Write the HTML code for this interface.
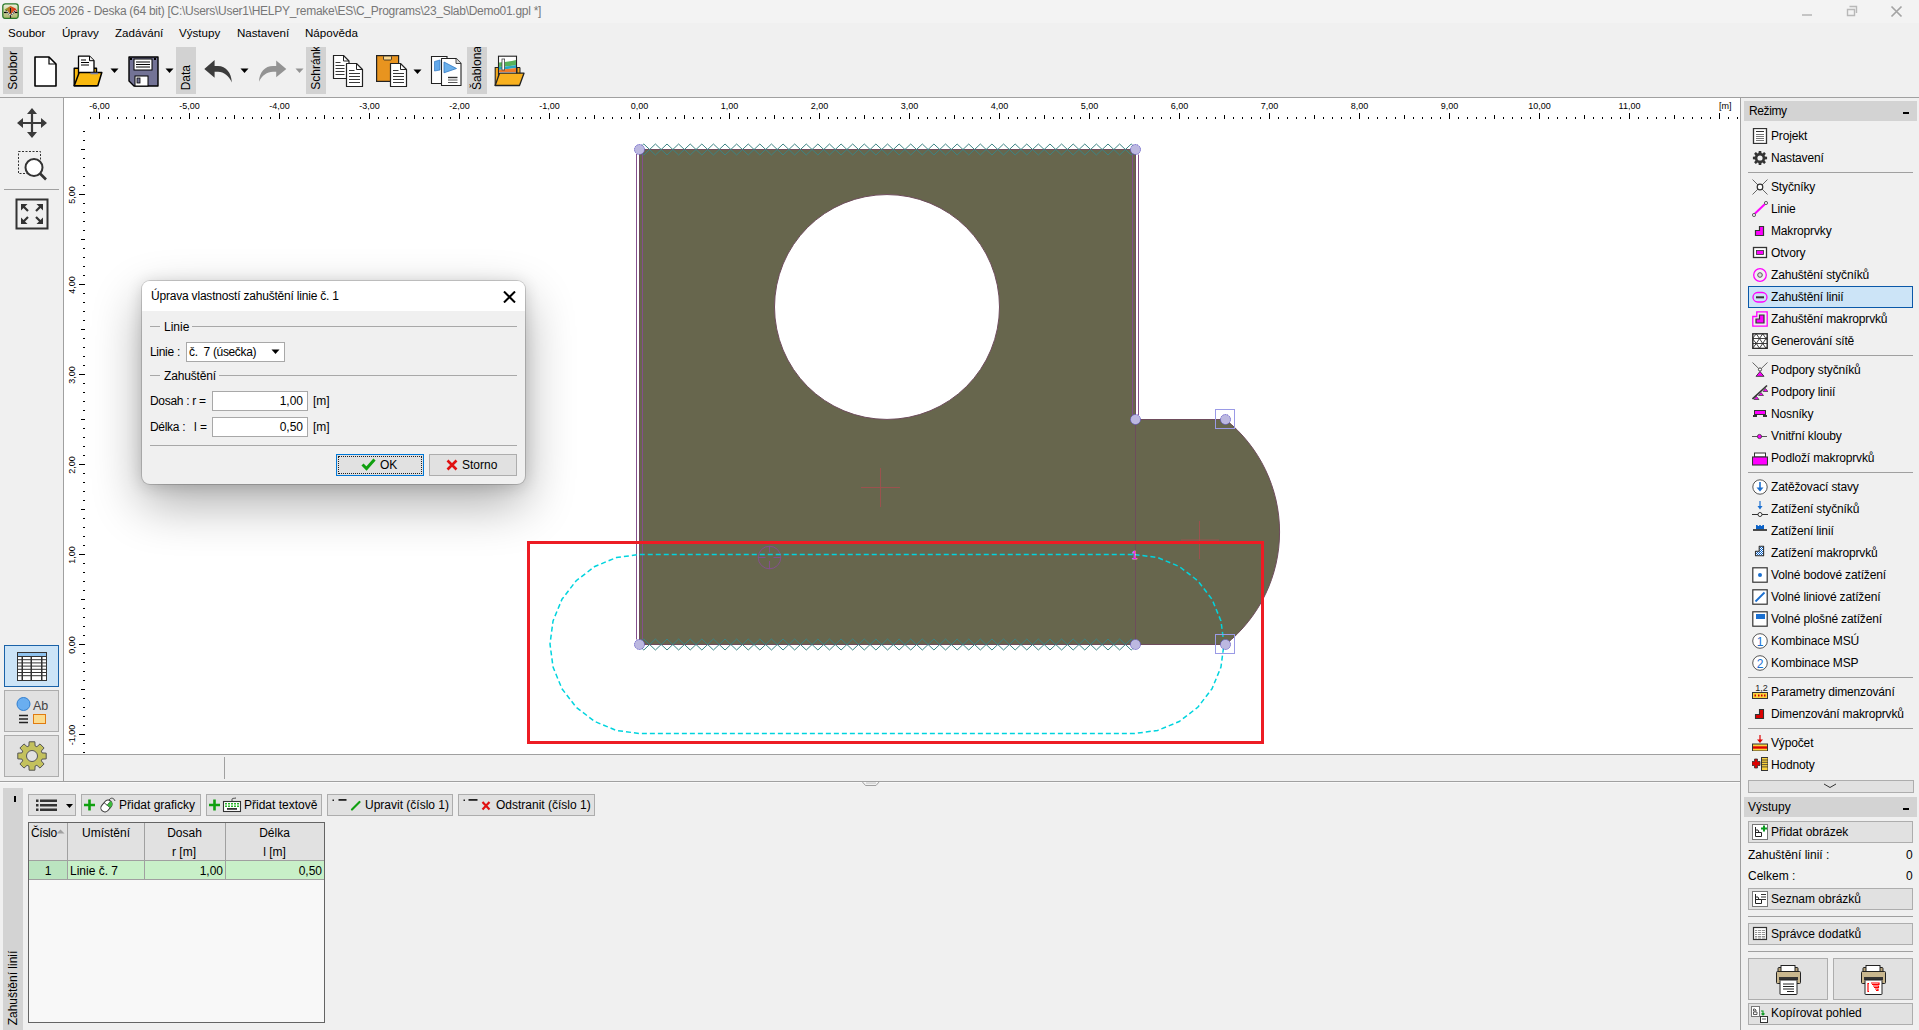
<!DOCTYPE html>
<html><head><meta charset="utf-8">
<style>
*{margin:0;padding:0;box-sizing:border-box}
html,body{width:1919px;height:1030px;overflow:hidden;background:#f0f0f0;font-family:"Liberation Sans",sans-serif;font-size:12px;color:#000}
.a{position:absolute}
.t{position:absolute;white-space:nowrap;line-height:14px}
#title{left:0;top:0;width:1919px;height:23px;background:#f3f3f3}
#menu{left:0;top:23px;width:1919px;height:21px;background:#f0f0f0}
.vl{position:absolute;background:#d2d2d2;width:20px;height:47px;top:47px}
.vl{overflow:hidden}.vl span{position:absolute;left:3px;bottom:4px;writing-mode:vertical-rl;transform:rotate(180deg);white-space:nowrap;font-size:12px;line-height:14px}
#canvas{left:64px;top:98px;width:1676px;height:656px;background:#fff}
#rp{left:1741px;top:98px;width:178px;height:932px;background:#f0f0f0}
.hline{position:absolute;height:1px;background:#a0a0a0}
.vline{position:absolute;width:1px;background:#a0a0a0}
</style></head><body>
<div id="title" class="a"></div>
<div id="menu" class="a"></div>

<!-- TITLE BAR -->
<svg class="a" style="left:2px;top:3px" width="17" height="16" viewBox="0 0 17 16">
<defs><linearGradient id="ig" x1="0" y1="0" x2="0" y2="1"><stop offset="0" stop-color="#eef0dc"/><stop offset="1" stop-color="#aab46a"/></linearGradient>
<linearGradient id="fg" x1="0" y1="0" x2="1" y2="0"><stop offset="0" stop-color="#7ab030"/><stop offset="0.5" stop-color="#d0601c"/><stop offset="1" stop-color="#e01818"/></linearGradient></defs>
<rect x="0.8" y="0.8" width="15.4" height="14.6" rx="2.5" fill="url(#ig)" stroke="#2a7a2a" stroke-width="1.3"/>
<path d="M2 9.5H15.5" stroke="#000" stroke-width="1.2"/>
<path d="M2.5 6.5L8.5 3L13.5 5.5L15 8L10 11L8 12Z" fill="url(#fg)"/>
<path d="M8.5 5V10" stroke="#222" stroke-width="1"/>
<path d="M4 7.5L8.5 12.5L13.5 7.5" stroke="#fff" stroke-width="1.5" fill="none"/>
<path d="M4 7.5L8.5 12.5L13.5 7.5" stroke="#222" stroke-width="1.5" fill="none" stroke-dasharray="1 1"/>
<path d="M8.5 13V15" stroke="#222" stroke-width="1.2"/>
</svg>
<div class="t" style="left:23px;top:4px;font-size:12px;letter-spacing:-0.28px;color:#777">GEO5 2026 - Deska (64 bit) [C:\Users\User1\HELPY_remake\ES\C_Programs\23_Slab\Demo01.gpl *]</div>
<!-- window controls -->
<div class="a" style="left:1802px;top:14px;width:10px;height:2px;background:#c4c4c4"></div>
<svg class="a" style="left:1846px;top:5px" width="12" height="12" viewBox="0 0 12 12"><path d="M3.5 1.5h7v6.5M1.5 4.5h7v6h-7z" fill="none" stroke="#b8b8b8" stroke-width="1.4"/></svg>
<svg class="a" style="left:1890px;top:5px" width="13" height="13" viewBox="0 0 13 13"><path d="M1.5 1.5L11.5 11.5M11.5 1.5L1.5 11.5" stroke="#a4a4a4" stroke-width="1.7"/></svg>
<!-- MENU -->
<div class="t" style="left:8px;top:26px;font-size:11.6px">Soubor</div>
<div class="t" style="left:62px;top:26px;font-size:11.6px">Úpravy</div>
<div class="t" style="left:115px;top:26px;font-size:11.6px">Zadávání</div>
<div class="t" style="left:179px;top:26px;font-size:11.6px">Výstupy</div>
<div class="t" style="left:237px;top:26px;font-size:11.6px">Nastavení</div>
<div class="t" style="left:305px;top:26px;font-size:11.6px">Nápověda</div>
<!-- TOOLBAR -->
<div class="vl" style="left:3px"><span>Soubor</span></div>
<div class="vl" style="left:176px"><span>Data</span></div>
<div class="vl" style="left:306px"><span>Schránka</span></div>
<div class="vl" style="left:467px"><span>Šablona</span></div>
<!-- new -->
<svg class="a" style="left:34px;top:56px" width="23" height="31" viewBox="0 0 23 31"><path d="M1 1H15L22 8V30H1Z" fill="#fff" stroke="#000" stroke-width="1.6" stroke-linejoin="round"/><path d="M15 1V8H22" fill="none" stroke="#000" stroke-width="1.2"/></svg>
<!-- open -->
<svg class="a" style="left:73px;top:55px" width="30" height="32" viewBox="0 0 30 32">
<path d="M1.2 13.2H23.5V30.8H1.2Z" fill="#f9b90f" stroke="#000" stroke-width="1.4" stroke-linejoin="round"/>
<path d="M5.5 1.2H16.5L21 5.7V19H5.5Z" fill="#fff" stroke="#000" stroke-width="1.3" stroke-linejoin="round"/>
<path d="M16.5 1.2V5.7H21" fill="#eee" stroke="#000" stroke-width="1"/>
<path d="M8 5H13M8 7.5H16M8 10H16" stroke="#000" stroke-width="1"/>
<path d="M1.2 30.8L6.2 17.5H28.8L24.8 30.8Z" fill="#f9b90f" stroke="#000" stroke-width="1.5" stroke-linejoin="round"/>
<path d="M17.5 18.5H25" stroke="#7a80a8" stroke-width="1.6"/>
</svg>
<svg class="a" style="left:110px;top:68px" width="9" height="6"><path d="M0.5 0.5H8.5L4.5 5Z" fill="#000"/></svg>
<!-- save -->
<svg class="a" style="left:128px;top:56px" width="31" height="31" viewBox="0 0 31 31">
<path d="M1 1H30V30H6L1 25Z" fill="#737396" stroke="#000" stroke-width="1.4" stroke-linejoin="round"/>
<rect x="6" y="3" width="18" height="11" fill="#fff" stroke="#000" stroke-width="1"/>
<path d="M8 6H22M8 8.5H22M8 11H22" stroke="#000" stroke-width="1"/>
<rect x="7" y="20" width="13" height="10" fill="#fff" stroke="#000" stroke-width="1"/>
<rect x="9" y="22" width="3" height="5" fill="#737396" stroke="#000" stroke-width="0.8"/>
<rect x="2" y="2" width="2" height="2" fill="#000"/><rect x="26" y="2" width="2" height="2" fill="#000"/>
</svg>
<svg class="a" style="left:165px;top:68px" width="9" height="6"><path d="M0.5 0.5H8.5L4.5 5Z" fill="#000"/></svg>
<!-- undo -->
<svg class="a" style="left:203px;top:59px" width="30" height="25" viewBox="0 0 30 25"><path d="M1.3 9.9L11.6 1V7H15C23 7 28.5 14 28.8 23.4C26 17 21 12.8 15 12.8H11.6V18.8Z" fill="#3c3c3c"/></svg>
<svg class="a" style="left:240px;top:68px" width="9" height="6"><path d="M0.5 0.5H8.5L4.5 5Z" fill="#000"/></svg>
<!-- redo -->
<svg class="a" style="left:258px;top:60px" width="30" height="23" viewBox="0 0 30 23"><path d="M28.3 8.9L18.2 0.6V6H15C7 6 1.3 12 1 21.8C4 15.5 9 11.8 15 11.8H18.2V17.2Z" fill="#939393"/></svg>
<svg class="a" style="left:295px;top:68px" width="9" height="6"><path d="M0.5 0.5H8.5L4.5 5Z" fill="#939393"/></svg>
<!-- copy -->
<svg class="a" style="left:332px;top:55px" width="32" height="33" viewBox="0 0 32 33">
<path d="M1.5 0.5H11.5L17 6V23.5H1.5Z" fill="#fff" stroke="#222" stroke-width="1.2" stroke-linejoin="round"/>
<path d="M11.5 0.5V6H17" fill="none" stroke="#222" stroke-width="1"/>
<path d="M3.5 7.5H8.5M3.5 10.5H12.5M3.5 13.5H12.5M3.5 16.5H12.5M3.5 19.5H12.5" stroke="#222" stroke-width="0.9"/>
<path d="M14.5 8.5H24.5L30.5 14.5V31.5H14.5Z" fill="#fff" stroke="#222" stroke-width="1.2" stroke-linejoin="round"/>
<path d="M24.5 8.5V14.5H30.5" fill="none" stroke="#222" stroke-width="1"/>
<path d="M17 15.5H22.5M17 18.5H28M17 21.5H28M17 24.5H28M17 27.5H28" stroke="#222" stroke-width="0.9"/>
</svg>
<!-- paste -->
<svg class="a" style="left:376px;top:55px" width="33" height="33" viewBox="0 0 33 33">
<rect x="0.6" y="0.6" width="22" height="25.8" fill="#e8941f" stroke="#222" stroke-width="1.2"/>
<rect x="7.5" y="1" width="8" height="4" rx="1" fill="#fbd88e" stroke="#222" stroke-width="0.8"/>
<path d="M14.5 8.5H24.5L30.5 14.5V31.5H14.5Z" fill="#fff" stroke="#222" stroke-width="1.2" stroke-linejoin="round"/>
<path d="M24.5 8.5V14.5H30.5" fill="none" stroke="#222" stroke-width="1"/>
<path d="M17 15.5H22.5M17 18.5H28M17 21.5H28M17 24.5H28M17 27.5H28" stroke="#222" stroke-width="0.9"/>
</svg>
<svg class="a" style="left:413px;top:69px" width="9" height="6"><path d="M0.5 0.5H8.5L4.5 5Z" fill="#000"/></svg>
<!-- template -->
<svg class="a" style="left:430px;top:55px" width="32" height="32" viewBox="0 0 32 32">
<path d="M1.5 1.5H17V28.5H1.5Z" fill="#fff" stroke="#222" stroke-width="1.1"/>
<path d="M4.5 6.5L10 5V15L4.5 16Z" fill="#62a8ea" stroke="#2f77c2" stroke-width="0.7"/>
<path d="M11.5 3.5H26L31 8.5V30.5H11.5Z" fill="#fff" stroke="#222" stroke-width="1.1" stroke-linejoin="round"/>
<path d="M26 3.5V8.5H31" fill="#ddd" stroke="#222" stroke-width="0.8"/>
<path d="M14 7L26.5 13.5L14 17.8Z" fill="#6ab0ec" stroke="#2f77c2" stroke-width="0.8" stroke-linejoin="round"/>
<path d="M18 22.5H27.5" stroke="#333" stroke-width="1.4"/><path d="M18 25H27.5M18 27.5H27.5" stroke="#444" stroke-width="0.9"/>
</svg>
<!-- open template -->
<svg class="a" style="left:494px;top:55px" width="31" height="32" viewBox="0 0 31 32">
<path d="M1.2 12.5H5.5V30.5H1.2Z" fill="#f3a81c" stroke="#222" stroke-width="1.1"/>
<path d="M23 12.5H26V20H23Z" fill="#f3a81c" stroke="#222" stroke-width="1"/>
<rect x="4.5" y="1.2" width="18" height="22" fill="#fff" stroke="#222" stroke-width="1.1"/>
<path d="M5 7.5C11 7 16 6.5 22 5V10C16 11 11 11.5 5 12Z" fill="#56b35a"/>
<path d="M5 12C11 11.5 16 11 22 10V13C16 14 11 14 5 15Z" fill="#28a7c4"/>
<path d="M5 15C11 14 16 14 22 13V17H5Z" fill="#f07b28"/>
<rect x="8" y="4" width="2.6" height="11" fill="#fff" stroke="#444" stroke-width="0.8"/>
<path d="M1.2 30.5L5.5 18.2H30L25.5 30.5Z" fill="#f9b11f" stroke="#222" stroke-width="1.3" stroke-linejoin="round"/>
</svg>
<div class="hline" style="left:0;top:97px;width:1919px"></div>
<div id="canvas" class="a"></div>
<!--CANVAS-->
<svg class="a" style="left:64px;top:98px" width="1676" height="656" viewBox="64 98 1676 656" shape-rendering="auto">
<g fill="#000"><rect x="90" y="117" width="1" height="2"/><rect x="99" y="113" width="1" height="6"/><rect x="108" y="117" width="1" height="2"/><rect x="117" y="117" width="1" height="2"/><rect x="126" y="117" width="1" height="2"/><rect x="135" y="117" width="1" height="2"/><rect x="144" y="115" width="1" height="4"/><rect x="153" y="117" width="1" height="2"/><rect x="162" y="117" width="1" height="2"/><rect x="171" y="117" width="1" height="2"/><rect x="180" y="117" width="1" height="2"/><rect x="189" y="113" width="1" height="6"/><rect x="198" y="117" width="1" height="2"/><rect x="207" y="117" width="1" height="2"/><rect x="216" y="117" width="1" height="2"/><rect x="225" y="117" width="1" height="2"/><rect x="234" y="115" width="1" height="4"/><rect x="243" y="117" width="1" height="2"/><rect x="252" y="117" width="1" height="2"/><rect x="261" y="117" width="1" height="2"/><rect x="270" y="117" width="1" height="2"/><rect x="279" y="113" width="1" height="6"/><rect x="288" y="117" width="1" height="2"/><rect x="297" y="117" width="1" height="2"/><rect x="306" y="117" width="1" height="2"/><rect x="315" y="117" width="1" height="2"/><rect x="324" y="115" width="1" height="4"/><rect x="333" y="117" width="1" height="2"/><rect x="342" y="117" width="1" height="2"/><rect x="351" y="117" width="1" height="2"/><rect x="360" y="117" width="1" height="2"/><rect x="369" y="113" width="1" height="6"/><rect x="378" y="117" width="1" height="2"/><rect x="387" y="117" width="1" height="2"/><rect x="396" y="117" width="1" height="2"/><rect x="405" y="117" width="1" height="2"/><rect x="414" y="115" width="1" height="4"/><rect x="423" y="117" width="1" height="2"/><rect x="432" y="117" width="1" height="2"/><rect x="441" y="117" width="1" height="2"/><rect x="450" y="117" width="1" height="2"/><rect x="459" y="113" width="1" height="6"/><rect x="468" y="117" width="1" height="2"/><rect x="477" y="117" width="1" height="2"/><rect x="486" y="117" width="1" height="2"/><rect x="495" y="117" width="1" height="2"/><rect x="504" y="115" width="1" height="4"/><rect x="513" y="117" width="1" height="2"/><rect x="522" y="117" width="1" height="2"/><rect x="531" y="117" width="1" height="2"/><rect x="540" y="117" width="1" height="2"/><rect x="549" y="113" width="1" height="6"/><rect x="558" y="117" width="1" height="2"/><rect x="567" y="117" width="1" height="2"/><rect x="576" y="117" width="1" height="2"/><rect x="585" y="117" width="1" height="2"/><rect x="594" y="115" width="1" height="4"/><rect x="603" y="117" width="1" height="2"/><rect x="612" y="117" width="1" height="2"/><rect x="621" y="117" width="1" height="2"/><rect x="630" y="117" width="1" height="2"/><rect x="639" y="113" width="1" height="6"/><rect x="648" y="117" width="1" height="2"/><rect x="657" y="117" width="1" height="2"/><rect x="666" y="117" width="1" height="2"/><rect x="675" y="117" width="1" height="2"/><rect x="684" y="115" width="1" height="4"/><rect x="693" y="117" width="1" height="2"/><rect x="702" y="117" width="1" height="2"/><rect x="711" y="117" width="1" height="2"/><rect x="720" y="117" width="1" height="2"/><rect x="729" y="113" width="1" height="6"/><rect x="738" y="117" width="1" height="2"/><rect x="747" y="117" width="1" height="2"/><rect x="756" y="117" width="1" height="2"/><rect x="765" y="117" width="1" height="2"/><rect x="774" y="115" width="1" height="4"/><rect x="783" y="117" width="1" height="2"/><rect x="792" y="117" width="1" height="2"/><rect x="801" y="117" width="1" height="2"/><rect x="810" y="117" width="1" height="2"/><rect x="819" y="113" width="1" height="6"/><rect x="828" y="117" width="1" height="2"/><rect x="837" y="117" width="1" height="2"/><rect x="846" y="117" width="1" height="2"/><rect x="855" y="117" width="1" height="2"/><rect x="864" y="115" width="1" height="4"/><rect x="873" y="117" width="1" height="2"/><rect x="882" y="117" width="1" height="2"/><rect x="891" y="117" width="1" height="2"/><rect x="900" y="117" width="1" height="2"/><rect x="909" y="113" width="1" height="6"/><rect x="918" y="117" width="1" height="2"/><rect x="927" y="117" width="1" height="2"/><rect x="936" y="117" width="1" height="2"/><rect x="945" y="117" width="1" height="2"/><rect x="954" y="115" width="1" height="4"/><rect x="963" y="117" width="1" height="2"/><rect x="972" y="117" width="1" height="2"/><rect x="981" y="117" width="1" height="2"/><rect x="990" y="117" width="1" height="2"/><rect x="999" y="113" width="1" height="6"/><rect x="1008" y="117" width="1" height="2"/><rect x="1017" y="117" width="1" height="2"/><rect x="1026" y="117" width="1" height="2"/><rect x="1035" y="117" width="1" height="2"/><rect x="1044" y="115" width="1" height="4"/><rect x="1053" y="117" width="1" height="2"/><rect x="1062" y="117" width="1" height="2"/><rect x="1071" y="117" width="1" height="2"/><rect x="1080" y="117" width="1" height="2"/><rect x="1089" y="113" width="1" height="6"/><rect x="1098" y="117" width="1" height="2"/><rect x="1107" y="117" width="1" height="2"/><rect x="1116" y="117" width="1" height="2"/><rect x="1125" y="117" width="1" height="2"/><rect x="1134" y="115" width="1" height="4"/><rect x="1143" y="117" width="1" height="2"/><rect x="1152" y="117" width="1" height="2"/><rect x="1161" y="117" width="1" height="2"/><rect x="1170" y="117" width="1" height="2"/><rect x="1179" y="113" width="1" height="6"/><rect x="1188" y="117" width="1" height="2"/><rect x="1197" y="117" width="1" height="2"/><rect x="1206" y="117" width="1" height="2"/><rect x="1215" y="117" width="1" height="2"/><rect x="1224" y="115" width="1" height="4"/><rect x="1233" y="117" width="1" height="2"/><rect x="1242" y="117" width="1" height="2"/><rect x="1251" y="117" width="1" height="2"/><rect x="1260" y="117" width="1" height="2"/><rect x="1269" y="113" width="1" height="6"/><rect x="1278" y="117" width="1" height="2"/><rect x="1287" y="117" width="1" height="2"/><rect x="1296" y="117" width="1" height="2"/><rect x="1305" y="117" width="1" height="2"/><rect x="1314" y="115" width="1" height="4"/><rect x="1323" y="117" width="1" height="2"/><rect x="1332" y="117" width="1" height="2"/><rect x="1341" y="117" width="1" height="2"/><rect x="1350" y="117" width="1" height="2"/><rect x="1359" y="113" width="1" height="6"/><rect x="1368" y="117" width="1" height="2"/><rect x="1377" y="117" width="1" height="2"/><rect x="1386" y="117" width="1" height="2"/><rect x="1395" y="117" width="1" height="2"/><rect x="1404" y="115" width="1" height="4"/><rect x="1413" y="117" width="1" height="2"/><rect x="1422" y="117" width="1" height="2"/><rect x="1431" y="117" width="1" height="2"/><rect x="1440" y="117" width="1" height="2"/><rect x="1449" y="113" width="1" height="6"/><rect x="1458" y="117" width="1" height="2"/><rect x="1467" y="117" width="1" height="2"/><rect x="1476" y="117" width="1" height="2"/><rect x="1485" y="117" width="1" height="2"/><rect x="1494" y="115" width="1" height="4"/><rect x="1503" y="117" width="1" height="2"/><rect x="1512" y="117" width="1" height="2"/><rect x="1521" y="117" width="1" height="2"/><rect x="1530" y="117" width="1" height="2"/><rect x="1539" y="113" width="1" height="6"/><rect x="1548" y="117" width="1" height="2"/><rect x="1557" y="117" width="1" height="2"/><rect x="1566" y="117" width="1" height="2"/><rect x="1575" y="117" width="1" height="2"/><rect x="1584" y="115" width="1" height="4"/><rect x="1593" y="117" width="1" height="2"/><rect x="1602" y="117" width="1" height="2"/><rect x="1611" y="117" width="1" height="2"/><rect x="1620" y="117" width="1" height="2"/><rect x="1629" y="113" width="1" height="6"/><rect x="1638" y="117" width="1" height="2"/><rect x="1647" y="117" width="1" height="2"/><rect x="1656" y="117" width="1" height="2"/><rect x="1665" y="117" width="1" height="2"/><rect x="1674" y="115" width="1" height="4"/><rect x="1683" y="117" width="1" height="2"/><rect x="1692" y="117" width="1" height="2"/><rect x="1701" y="117" width="1" height="2"/><rect x="1710" y="117" width="1" height="2"/><rect x="1719" y="113" width="1" height="6"/><rect x="1728" y="117" width="1" height="2"/><rect x="1737" y="117" width="1" height="2"/></g>
<g font-family="Liberation Sans" font-size="9" text-anchor="middle" fill="#000"><text x="99.5" y="109">-6,00</text><text x="189.5" y="109">-5,00</text><text x="279.5" y="109">-4,00</text><text x="369.5" y="109">-3,00</text><text x="459.5" y="109">-2,00</text><text x="549.5" y="109">-1,00</text><text x="639.5" y="109">0,00</text><text x="729.5" y="109">1,00</text><text x="819.5" y="109">2,00</text><text x="909.5" y="109">3,00</text><text x="999.5" y="109">4,00</text><text x="1089.5" y="109">5,00</text><text x="1179.5" y="109">6,00</text><text x="1269.5" y="109">7,00</text><text x="1359.5" y="109">8,00</text><text x="1449.5" y="109">9,00</text><text x="1539.5" y="109">10,00</text><text x="1629.5" y="109">11,00</text></g>
<text x="1719" y="109" font-family="Liberation Sans" font-size="9" fill="#000">[m]</text>
<g fill="#000"><rect x="83" y="752" width="2" height="1"/><rect x="83" y="743" width="2" height="1"/><rect x="79" y="734" width="6" height="1"/><rect x="83" y="725" width="2" height="1"/><rect x="83" y="716" width="2" height="1"/><rect x="83" y="707" width="2" height="1"/><rect x="83" y="698" width="2" height="1"/><rect x="81" y="689" width="4" height="1"/><rect x="83" y="680" width="2" height="1"/><rect x="83" y="671" width="2" height="1"/><rect x="83" y="662" width="2" height="1"/><rect x="83" y="653" width="2" height="1"/><rect x="79" y="644" width="6" height="1"/><rect x="83" y="635" width="2" height="1"/><rect x="83" y="626" width="2" height="1"/><rect x="83" y="617" width="2" height="1"/><rect x="83" y="608" width="2" height="1"/><rect x="81" y="599" width="4" height="1"/><rect x="83" y="590" width="2" height="1"/><rect x="83" y="581" width="2" height="1"/><rect x="83" y="572" width="2" height="1"/><rect x="83" y="563" width="2" height="1"/><rect x="79" y="554" width="6" height="1"/><rect x="83" y="545" width="2" height="1"/><rect x="83" y="536" width="2" height="1"/><rect x="83" y="527" width="2" height="1"/><rect x="83" y="518" width="2" height="1"/><rect x="81" y="509" width="4" height="1"/><rect x="83" y="500" width="2" height="1"/><rect x="83" y="491" width="2" height="1"/><rect x="83" y="482" width="2" height="1"/><rect x="83" y="473" width="2" height="1"/><rect x="79" y="464" width="6" height="1"/><rect x="83" y="455" width="2" height="1"/><rect x="83" y="446" width="2" height="1"/><rect x="83" y="437" width="2" height="1"/><rect x="83" y="428" width="2" height="1"/><rect x="81" y="419" width="4" height="1"/><rect x="83" y="410" width="2" height="1"/><rect x="83" y="401" width="2" height="1"/><rect x="83" y="392" width="2" height="1"/><rect x="83" y="383" width="2" height="1"/><rect x="79" y="374" width="6" height="1"/><rect x="83" y="365" width="2" height="1"/><rect x="83" y="356" width="2" height="1"/><rect x="83" y="347" width="2" height="1"/><rect x="83" y="338" width="2" height="1"/><rect x="81" y="329" width="4" height="1"/><rect x="83" y="320" width="2" height="1"/><rect x="83" y="311" width="2" height="1"/><rect x="83" y="302" width="2" height="1"/><rect x="83" y="293" width="2" height="1"/><rect x="79" y="284" width="6" height="1"/><rect x="83" y="275" width="2" height="1"/><rect x="83" y="266" width="2" height="1"/><rect x="83" y="257" width="2" height="1"/><rect x="83" y="248" width="2" height="1"/><rect x="81" y="239" width="4" height="1"/><rect x="83" y="230" width="2" height="1"/><rect x="83" y="221" width="2" height="1"/><rect x="83" y="212" width="2" height="1"/><rect x="83" y="203" width="2" height="1"/><rect x="79" y="194" width="6" height="1"/><rect x="83" y="185" width="2" height="1"/><rect x="83" y="176" width="2" height="1"/><rect x="83" y="167" width="2" height="1"/><rect x="83" y="158" width="2" height="1"/><rect x="81" y="149" width="4" height="1"/><rect x="83" y="140" width="2" height="1"/><rect x="83" y="131" width="2" height="1"/></g>
<g font-family="Liberation Sans" font-size="9" text-anchor="middle" fill="#000"><text transform="translate(74.5 735.0) rotate(-90)" x="0" y="0">-1,00</text><text transform="translate(74.5 645.0) rotate(-90)" x="0" y="0">0,00</text><text transform="translate(74.5 555.0) rotate(-90)" x="0" y="0">1,00</text><text transform="translate(74.5 465.0) rotate(-90)" x="0" y="0">2,00</text><text transform="translate(74.5 375.0) rotate(-90)" x="0" y="0">3,00</text><text transform="translate(74.5 285.0) rotate(-90)" x="0" y="0">4,00</text><text transform="translate(74.5 195.0) rotate(-90)" x="0" y="0">5,00</text></g>
<path d="M639.5 149.5 H1135.5 V419.5 H1225.5 A144.07 144.07 0 0 1 1225.5 644.5 H639.5 Z M774.5 307.0 A112.5 112.5 0 0 0 999.5 307.0 A112.5 112.5 0 0 0 774.5 307.0 Z" fill="#67664d" fill-rule="evenodd" stroke="#6e4c5c" stroke-width="1"/>
<path d="M1135.5 419.5 V644.5" stroke="#6e4c5c" stroke-width="1"/>
<path d="M636.5 154.0 V639.5 M642.5 154.0 V639.5 M1132.5 154.5 V415.5 M1138.5 154.5 V415.5" stroke="#844f8c" stroke-width="1" fill="none"/>
<g stroke="#3c8484" stroke-width="1" fill="none"><path d="M638.00 149.50 643.80 144.00 649.61 149.50 655.41 144.00 661.21 149.50 667.01 144.00 672.82 149.50 678.62 144.00 684.42 149.50 690.22 144.00 696.02 149.50 701.83 144.00 707.63 149.50 713.43 144.00 719.24 149.50 725.04 144.00 730.84 149.50 736.64 144.00 742.45 149.50 748.25 144.00 754.05 149.50 759.85 144.00 765.65 149.50 771.46 144.00 777.26 149.50 783.06 144.00 788.87 149.50 794.67 144.00 800.47 149.50 806.27 144.00 812.08 149.50 817.88 144.00 823.68 149.50 829.48 144.00 835.28 149.50 841.09 144.00 846.89 149.50 852.69 144.00 858.50 149.50 864.30 144.00 870.10 149.50 875.90 144.00 881.71 149.50 887.51 144.00 893.31 149.50 899.11 144.00 904.91 149.50 910.72 144.00 916.52 149.50 922.32 144.00 928.12 149.50 933.93 144.00 939.73 149.50 945.53 144.00 951.34 149.50 957.14 144.00 962.94 149.50 968.74 144.00 974.55 149.50 980.35 144.00 986.15 149.50 991.95 144.00 997.75 149.50 1003.56 144.00 1009.36 149.50 1015.16 144.00 1020.97 149.50 1026.77 144.00 1032.57 149.50 1038.37 144.00 1044.17 149.50 1049.98 144.00 1055.78 149.50 1061.58 144.00 1067.38 149.50 1073.19 144.00 1078.99 149.50 1084.79 144.00 1090.60 149.50 1096.40 144.00 1102.20 149.50 1108.00 144.00 1113.81 149.50 1119.61 144.00 1125.41 149.50 1131.21 144.00 1137.02 149.50 " /><path d="M638.00 149.50 643.80 155.00 649.61 149.50 655.41 155.00 661.21 149.50 667.01 155.00 672.82 149.50 678.62 155.00 684.42 149.50 690.22 155.00 696.02 149.50 701.83 155.00 707.63 149.50 713.43 155.00 719.24 149.50 725.04 155.00 730.84 149.50 736.64 155.00 742.45 149.50 748.25 155.00 754.05 149.50 759.85 155.00 765.65 149.50 771.46 155.00 777.26 149.50 783.06 155.00 788.87 149.50 794.67 155.00 800.47 149.50 806.27 155.00 812.08 149.50 817.88 155.00 823.68 149.50 829.48 155.00 835.28 149.50 841.09 155.00 846.89 149.50 852.69 155.00 858.50 149.50 864.30 155.00 870.10 149.50 875.90 155.00 881.71 149.50 887.51 155.00 893.31 149.50 899.11 155.00 904.91 149.50 910.72 155.00 916.52 149.50 922.32 155.00 928.12 149.50 933.93 155.00 939.73 149.50 945.53 155.00 951.34 149.50 957.14 155.00 962.94 149.50 968.74 155.00 974.55 149.50 980.35 155.00 986.15 149.50 991.95 155.00 997.75 149.50 1003.56 155.00 1009.36 149.50 1015.16 155.00 1020.97 149.50 1026.77 155.00 1032.57 149.50 1038.37 155.00 1044.17 149.50 1049.98 155.00 1055.78 149.50 1061.58 155.00 1067.38 149.50 1073.19 155.00 1078.99 149.50 1084.79 155.00 1090.60 149.50 1096.40 155.00 1102.20 149.50 1108.00 155.00 1113.81 149.50 1119.61 155.00 1125.41 149.50 1131.21 155.00 1137.02 149.50 " /><path d="M638.00 644.50 643.80 639.00 649.61 644.50 655.41 639.00 661.21 644.50 667.01 639.00 672.82 644.50 678.62 639.00 684.42 644.50 690.22 639.00 696.02 644.50 701.83 639.00 707.63 644.50 713.43 639.00 719.24 644.50 725.04 639.00 730.84 644.50 736.64 639.00 742.45 644.50 748.25 639.00 754.05 644.50 759.85 639.00 765.65 644.50 771.46 639.00 777.26 644.50 783.06 639.00 788.87 644.50 794.67 639.00 800.47 644.50 806.27 639.00 812.08 644.50 817.88 639.00 823.68 644.50 829.48 639.00 835.28 644.50 841.09 639.00 846.89 644.50 852.69 639.00 858.50 644.50 864.30 639.00 870.10 644.50 875.90 639.00 881.71 644.50 887.51 639.00 893.31 644.50 899.11 639.00 904.91 644.50 910.72 639.00 916.52 644.50 922.32 639.00 928.12 644.50 933.93 639.00 939.73 644.50 945.53 639.00 951.34 644.50 957.14 639.00 962.94 644.50 968.74 639.00 974.55 644.50 980.35 639.00 986.15 644.50 991.95 639.00 997.75 644.50 1003.56 639.00 1009.36 644.50 1015.16 639.00 1020.97 644.50 1026.77 639.00 1032.57 644.50 1038.37 639.00 1044.17 644.50 1049.98 639.00 1055.78 644.50 1061.58 639.00 1067.38 644.50 1073.19 639.00 1078.99 644.50 1084.79 639.00 1090.60 644.50 1096.40 639.00 1102.20 644.50 1108.00 639.00 1113.81 644.50 1119.61 639.00 1125.41 644.50 1131.21 639.00 1137.02 644.50 " /><path d="M638.00 644.50 643.80 650.00 649.61 644.50 655.41 650.00 661.21 644.50 667.01 650.00 672.82 644.50 678.62 650.00 684.42 644.50 690.22 650.00 696.02 644.50 701.83 650.00 707.63 644.50 713.43 650.00 719.24 644.50 725.04 650.00 730.84 644.50 736.64 650.00 742.45 644.50 748.25 650.00 754.05 644.50 759.85 650.00 765.65 644.50 771.46 650.00 777.26 644.50 783.06 650.00 788.87 644.50 794.67 650.00 800.47 644.50 806.27 650.00 812.08 644.50 817.88 650.00 823.68 644.50 829.48 650.00 835.28 644.50 841.09 650.00 846.89 644.50 852.69 650.00 858.50 644.50 864.30 650.00 870.10 644.50 875.90 650.00 881.71 644.50 887.51 650.00 893.31 644.50 899.11 650.00 904.91 644.50 910.72 650.00 916.52 644.50 922.32 650.00 928.12 644.50 933.93 650.00 939.73 644.50 945.53 650.00 951.34 644.50 957.14 650.00 962.94 644.50 968.74 650.00 974.55 644.50 980.35 650.00 986.15 644.50 991.95 650.00 997.75 644.50 1003.56 650.00 1009.36 644.50 1015.16 650.00 1020.97 644.50 1026.77 650.00 1032.57 644.50 1038.37 650.00 1044.17 644.50 1049.98 650.00 1055.78 644.50 1061.58 650.00 1067.38 644.50 1073.19 650.00 1078.99 644.50 1084.79 650.00 1090.60 644.50 1096.40 650.00 1102.20 644.50 1108.00 650.00 1113.81 644.50 1119.61 650.00 1125.41 644.50 1131.21 650.00 1137.02 644.50 " /></g>
<g stroke="#a0504f" stroke-width="1" fill="none" opacity="0.9"><path d="M861 487.5H900M880.5 468V507"/><path d="M1181 540H1219M1199.5 521V559"/></g>
<g stroke="#84508c" stroke-width="1" fill="none"><circle cx="769.5" cy="557.5" r="11.3"/><path d="M769.5 546V552.5M769.5 561V569M758 557.5H765.5M773.5 557.5H781"/></g>
<path d="M1134.50 554.50 L1157.66 557.55 L1179.25 566.49 L1197.79 580.71 L1212.01 599.25 L1220.95 620.84 L1224.00 644.00 L1220.95 667.16 L1212.01 688.75 L1197.79 707.29 L1179.25 721.51 L1157.66 730.45 L1134.50 733.50 L639.50 733.50 L616.34 730.45 L594.75 721.51 L576.21 707.29 L561.99 688.75 L553.05 667.16 L550.00 644.00 L553.05 620.84 L561.99 599.25 L576.21 580.71 L594.75 566.49 L616.34 557.55 L639.50 554.50 Z" fill="none" stroke="#00d4de" stroke-width="1.5" stroke-dasharray="5 3"/>
<rect x="528.5" y="542.5" width="734" height="200" fill="none" stroke="#ed1c24" stroke-width="3"/>
<circle cx="639.5" cy="149.5" r="5" fill="#bcb8e0" stroke="#5b50c4" stroke-width="1" stroke-dasharray="1.2 1"/>
<circle cx="1135.5" cy="149.5" r="5" fill="#bcb8e0" stroke="#5b50c4" stroke-width="1" stroke-dasharray="1.2 1"/>
<circle cx="1135.5" cy="419.5" r="5" fill="#bcb8e0" stroke="#5b50c4" stroke-width="1" stroke-dasharray="1.2 1"/>
<circle cx="1225.5" cy="419.5" r="5" fill="#bcb8e0" stroke="#5b50c4" stroke-width="1" stroke-dasharray="1.2 1"/>
<circle cx="639.5" cy="644.5" r="5" fill="#bcb8e0" stroke="#5b50c4" stroke-width="1" stroke-dasharray="1.2 1"/>
<circle cx="1135.5" cy="644.5" r="5" fill="#bcb8e0" stroke="#5b50c4" stroke-width="1" stroke-dasharray="1.2 1"/>
<circle cx="1225.5" cy="644.5" r="5" fill="#bcb8e0" stroke="#5b50c4" stroke-width="1" stroke-dasharray="1.2 1"/>
<rect x="1215.5" y="409.5" width="19" height="19" fill="none" stroke="#9a9ae6" stroke-width="1"/>
<rect x="1215.5" y="634.5" width="19" height="19" fill="none" stroke="#9a9ae6" stroke-width="1"/>
<text x="1134.5" y="559" font-family="Liberation Sans" font-size="10" text-anchor="middle" fill="#ff00ff" stroke="#fff" stroke-width="0.4" paint-order="stroke">1</text>
</svg>
<!--/CANVAS-->
<div class="vline" style="left:63px;top:98px;height:683px"></div>
<div class="vline" style="left:1740px;top:98px;height:932px"></div>
<div class="hline" style="left:64px;top:754px;width:1676px"></div>
<div class="hline" style="left:0;top:781px;width:1740px"></div>

<!-- LEFT TOOLBAR -->
<svg class="a" style="left:16px;top:107px" width="32" height="32" viewBox="0 0 32 32">
<path d="M16 5V27M5 16H27" stroke="#3a3a3a" stroke-width="2.2"/>
<path d="M16 1L11 7H21Z M16 31L11 25H21Z M1 16L7 11V21Z M31 16L25 11V21Z" fill="#3a3a3a"/>
</svg>
<svg class="a" style="left:17px;top:150px" width="32" height="32" viewBox="0 0 32 32">
<rect x="1.5" y="1.5" width="22" height="22" fill="none" stroke="#333" stroke-width="1" stroke-dasharray="2 1.5"/>
<circle cx="17" cy="17.5" r="8.5" fill="#fff" stroke="#333" stroke-width="2"/>
<path d="M23 23.5L29 29.5" stroke="#333" stroke-width="2.6"/>
</svg>
<div class="a" style="left:4px;top:189px;width:55px;height:1px;background:#a0a0a0"></div>
<svg class="a" style="left:15px;top:198px" width="34" height="32" viewBox="0 0 34 32">
<rect x="1.5" y="1.5" width="31" height="29" fill="none" stroke="#333" stroke-width="2"/>
<g fill="#333"><path d="M6 6H12.5L6 12.5Z"/><path d="M28 6H21.5L28 12.5Z"/><path d="M6 26H12.5L6 19.5Z"/><path d="M28 26H21.5L28 19.5Z"/></g>
<path d="M8 8L13 13M26 8L21 13M8 24L13 19M26 24L21 19" stroke="#333" stroke-width="2.2"/>
</svg>
<div class="a" style="left:4px;top:645px;width:55px;height:42px;background:#cce4f7;border:1px solid #1a62a8"></div>
<svg class="a" style="left:17px;top:652px" width="31" height="30" viewBox="0 0 31 30">
<rect x="0" y="0" width="30" height="29" fill="#333"/>
<rect x="1" y="1" width="28" height="3" fill="#8ec2ee"/>
<g fill="#fff">
<rect x="1" y="5" width="3.5" height="2.2"/><rect x="6" y="5" width="7.5" height="2.2"/><rect x="15" y="5" width="9" height="2.2"/><rect x="25.5" y="5" width="3.5" height="2.2"/>
<rect x="1" y="8.2" width="3.5" height="2.2"/><rect x="6" y="8.2" width="7.5" height="2.2"/><rect x="15" y="8.2" width="9" height="2.2"/><rect x="25.5" y="8.2" width="3.5" height="2.2"/>
<rect x="1" y="11.4" width="3.5" height="2.2"/><rect x="6" y="11.4" width="7.5" height="2.2"/><rect x="15" y="11.4" width="9" height="2.2"/><rect x="25.5" y="11.4" width="3.5" height="2.2"/>
<rect x="1" y="14.6" width="3.5" height="2.2"/><rect x="6" y="14.6" width="7.5" height="2.2"/><rect x="15" y="14.6" width="9" height="2.2"/><rect x="25.5" y="14.6" width="3.5" height="2.2"/>
<rect x="1" y="17.8" width="3.5" height="2.2"/><rect x="6" y="17.8" width="7.5" height="2.2"/><rect x="15" y="17.8" width="9" height="2.2"/><rect x="25.5" y="17.8" width="3.5" height="2.2"/>
<rect x="1" y="21" width="3.5" height="2.2"/><rect x="6" y="21" width="7.5" height="2.2"/><rect x="15" y="21" width="9" height="2.2"/><rect x="25.5" y="21" width="3.5" height="2.2"/>
<rect x="1" y="24.2" width="3.5" height="3.8"/><rect x="6" y="24.2" width="7.5" height="3.8"/><rect x="15" y="24.2" width="9" height="3.8"/><rect x="25.5" y="24.2" width="3.5" height="3.8"/>
</g></svg>
<div class="a" style="left:4px;top:690px;width:55px;height:42px;background:#e1e1e1;border:1px solid #adadad"></div>
<svg class="a" style="left:14px;top:695px" width="36" height="32" viewBox="0 0 36 32">
<circle cx="9.5" cy="9" r="6.5" fill="#6aaef0" stroke="#2f7ed0" stroke-width="1"/>
<text x="19" y="15" font-family="Liberation Sans" font-size="12.5" fill="#444">Ab</text>
<path d="M5 20.5H14M5 24H14M5 27.5H14" stroke="#222" stroke-width="1.6"/>
<rect x="19.5" y="19.5" width="12" height="9" fill="#fbdb8e" stroke="#e07b10" stroke-width="1"/>
</svg>
<div class="a" style="left:4px;top:735px;width:55px;height:42px;background:#e1e1e1;border:1px solid #adadad"></div>
<svg class="a" style="left:16px;top:740px" width="32" height="32" viewBox="0 0 32 32">
<path d="M12.90 5.97 L13.12 1.79 L18.88 1.79 L19.10 5.97 L20.90 6.71 L24.01 3.91 L28.09 7.99 L25.29 11.10 L26.03 12.90 L30.21 13.12 L30.21 18.88 L26.03 19.10 L25.29 20.90 L28.09 24.01 L24.01 28.09 L20.90 25.29 L19.10 26.03 L18.88 30.21 L13.12 30.21 L12.90 26.03 L11.10 25.29 L7.99 28.09 L3.91 24.01 L6.71 20.90 L5.97 19.10 L1.79 18.88 L1.79 13.12 L5.97 12.90 L6.71 11.10 L3.91 7.99 L7.99 3.91 L11.10 6.71 Z M21.5 16A5.5 5.5 0 1 0 10.5 16A5.5 5.5 0 1 0 21.5 16Z" fill="#c3c15d" fill-rule="evenodd" stroke="#555" stroke-width="1" stroke-linejoin="round"/>
</svg>
<div id="rp" class="a"></div>
<!--BOTTOM-->
<!-- STATUS BAR sep -->
<div class="a" style="left:224px;top:757px;width:1px;height:22px;background:#a0a0a0"></div>
<div class="a" style="left:0;top:782px;width:1740px;height:1px;background:#fff;opacity:0.6"></div>
<!-- splitter grip -->
<svg class="a" style="left:861px;top:781px" width="20" height="6" viewBox="0 0 20 6"><path d="M1 0.5L4.5 4.5H15L18.5 0.5" fill="none" stroke="#a0a0a0" stroke-width="1"/><path d="M5.5 2H15" stroke="#999" stroke-width="1" stroke-dasharray="1 1"/></svg>
<!-- BOTTOM PANEL -->
<div class="a" style="left:3px;top:788px;width:20px;height:242px;background:#d3d3d3"></div>
<div class="a" style="left:14px;top:796px;width:2px;height:6px;background:#000"></div>
<div class="t" style="left:13px;top:988px;font-size:12px;transform:translate(-50%,-50%) rotate(-90deg)">Zahuštění linií</div>
<div class="a" style="left:28px;top:794px;width:48px;height:22px;background:#e1e1e1;border:1px solid #adadad"></div>
<svg class="a" style="left:35px;top:799px" width="40" height="13" viewBox="0 0 40 13">
<g fill="#333"><rect x="1" y="0.5" width="2.5" height="2.5"/><rect x="5" y="0.5" width="17" height="2.5"/><rect x="1" y="5" width="2.5" height="2.5"/><rect x="5" y="5" width="17" height="2.5"/><rect x="1" y="9.5" width="2.5" height="2.5"/><rect x="5" y="9.5" width="17" height="2.5"/></g>
<path d="M31 5H38L34.5 9Z" fill="#000"/></svg>
<div class="a" style="left:81px;top:794px;width:120px;height:22px;background:#e1e1e1;border:1px solid #adadad"></div>
<svg class="a" style="left:83px;top:797px" width="34" height="16" viewBox="0 0 34 16">
<path d="M6.5 2.5V13.5M1 8H12" stroke="#10a010" stroke-width="2.6"/>
<g transform="translate(23.5 9) rotate(40)"><rect x="-4" y="-6.5" width="8" height="13" rx="4" fill="#fff" stroke="#333" stroke-width="1"/><path d="M-4 -1H4M0 -6.5V-1" stroke="#333" stroke-width="0.8"/><path d="M0 -6.5A4 4 0 0 1 4 -2.5V-1H0Z" fill="#3cb93c"/></g>
<path d="M26 3C28 0 31 1 32 4" stroke="#333" stroke-width="0.9" fill="none"/>
</svg>
<div class="t" style="left:119px;top:798px;font-size:12px">Přidat graficky</div>
<div class="a" style="left:206px;top:794px;width:116px;height:22px;background:#e1e1e1;border:1px solid #adadad"></div>
<svg class="a" style="left:208px;top:797px" width="36" height="16" viewBox="0 0 36 16">
<path d="M6.5 2.5V13.5M1 8H12" stroke="#10a010" stroke-width="2.6"/>
<rect x="15.5" y="4.5" width="17" height="10" fill="#fff" stroke="#333" stroke-width="1.1"/>
<path d="M24 4.5V2.5C24 1 26 1.5 28 1" stroke="#333" stroke-width="0.9" fill="none"/>
<g fill="#2bb52b"><rect x="17" y="6" width="2" height="1.5"/><rect x="20" y="6" width="2" height="1.5"/><rect x="23" y="6" width="2" height="1.5"/><rect x="26" y="6" width="2" height="1.5"/><rect x="29" y="6" width="2" height="1.5"/>
<rect x="17" y="8.5" width="2" height="1.5"/><rect x="20" y="8.5" width="2" height="1.5"/><rect x="23" y="8.5" width="2" height="1.5"/><rect x="26" y="8.5" width="2" height="1.5"/><rect x="29" y="8.5" width="2" height="1.5"/></g>
<rect x="19" y="11" width="10" height="1.8" fill="#333"/>
</svg>
<div class="t" style="left:244px;top:798px;font-size:12px">Přidat textově</div>
<div class="a" style="left:327px;top:794px;width:126px;height:22px;background:#e1e1e1;border:1px solid #adadad"></div>
<svg class="a" style="left:331px;top:798px" width="32" height="14" viewBox="0 0 32 14"><rect x="1.5" y="1.5" width="1.5" height="1.5" fill="#222"/><rect x="7.5" y="1" width="8" height="1.8" fill="#222"/><path d="M21 11.5L28.5 4" stroke="#10a010" stroke-width="2.2" stroke-linecap="round"/></svg>
<div class="t" style="left:365px;top:798px;font-size:12px">Upravit (číslo 1)</div>
<div class="a" style="left:458px;top:794px;width:137px;height:22px;background:#e1e1e1;border:1px solid #adadad"></div>
<svg class="a" style="left:462px;top:798px" width="32" height="14" viewBox="0 0 32 14"><rect x="1.5" y="1.5" width="1.5" height="1.5" fill="#222"/><rect x="6.5" y="1" width="9" height="1.8" fill="#222"/><path d="M20.5 4L27.5 11.5M27.5 4L20.5 11.5" stroke="#e01010" stroke-width="2.2"/></svg>
<div class="t" style="left:496px;top:798px;font-size:12px">Odstranit (číslo 1)</div>
<!-- TABLE -->
<div class="a" style="left:28px;top:822px;width:297px;height:201px;background:#f8f8f8;border:1px solid #646464"></div>
<div class="a" style="left:29px;top:823px;width:295px;height:37px;background:#e1e1e1"></div>
<div class="a" style="left:29px;top:860px;width:295px;height:1px;background:#a0a0a0"></div>
<div class="a" style="left:29px;top:861px;width:38px;height:18px;background:#bbe4c0"></div>
<div class="a" style="left:68px;top:861px;width:256px;height:18px;background:#c8f0c8"></div>
<div class="a" style="left:29px;top:879px;width:295px;height:1px;background:#a0a0a0"></div>
<div class="a" style="left:67px;top:823px;width:1px;height:56px;background:#a0a0a0"></div>
<div class="a" style="left:144px;top:823px;width:1px;height:56px;background:#a0a0a0"></div>
<div class="a" style="left:225px;top:823px;width:1px;height:56px;background:#a0a0a0"></div>
<div class="t" style="left:31px;top:826px;font-size:12px;letter-spacing:-0.3px">Číslo</div>
<svg class="a" style="left:56px;top:829px" width="9" height="5"><path d="M0.5 4.5L4.5 0.5L8.5 4.5Z" fill="#a0a0a0"/></svg>
<div class="t" style="left:106px;top:826px;font-size:12px;transform:translateX(-50%)">Umístění</div>
<div class="t" style="left:184.5px;top:826px;font-size:12px;transform:translateX(-50%)">Dosah</div>
<div class="t" style="left:184px;top:845px;font-size:12px;transform:translateX(-50%)">r [m]</div>
<div class="t" style="left:274.5px;top:826px;font-size:12px;transform:translateX(-50%)">Délka</div>
<div class="t" style="left:274.5px;top:845px;font-size:12px;transform:translateX(-50%)">l [m]</div>
<div class="t" style="left:48px;top:864px;font-size:12px;transform:translateX(-50%)">1</div>
<div class="t" style="left:70px;top:864px;font-size:12px">Linie č. 7</div>
<div class="t" style="left:223px;top:864px;font-size:12px;transform:translateX(-100%)">1,00</div>
<div class="t" style="left:322px;top:864px;font-size:12px;transform:translateX(-100%)">0,50</div>

<!--/BOTTOM-->
<!--RIGHT-->
<!-- RIGHT PANEL -->
<div class="a" style="left:1744px;top:101px;width:173px;height:20px;background:#d3d3d3"></div>
<div class="t" style="left:1749px;top:104px;font-size:12px;letter-spacing:-0.4px">Režimy</div>
<div class="a" style="left:1903px;top:112px;width:6px;height:2px;background:#000"></div>
<div class="a" style="left:1748px;top:286px;width:165px;height:22px;background:#cce4f7;border:1px solid #0a58a8"></div>
<svg class="a" style="left:1752px;top:128px" width="16" height="16" viewBox="0 0 16 16"><rect x="1.5" y="0.5" width="13" height="15" fill="#fff" stroke="#333" stroke-width="1.3"/><path d="M4 3.5H12" stroke="#333" stroke-width="1"/><path d="M4 6.5H12M4 8.5H12M4 10.5H12M4 12.5H12" stroke="#555" stroke-width="0.8"/></svg>
<div class="t" style="left:1771px;top:129px;font-size:12px;letter-spacing:-0.15px">Projekt</div>
<svg class="a" style="left:1752px;top:150px" width="16" height="16" viewBox="0 0 16 16"><path d="M6.46 3.03 L6.78 0.90 L9.22 0.90 L9.54 3.03 L10.43 3.40 L12.16 2.12 L13.88 3.84 L12.60 5.57 L12.97 6.46 L15.10 6.78 L15.10 9.22 L12.97 9.54 L12.60 10.43 L13.88 12.16 L12.16 13.88 L10.43 12.60 L9.54 12.97 L9.22 15.10 L6.78 15.10 L6.46 12.97 L5.57 12.60 L3.84 13.88 L2.12 12.16 L3.40 10.43 L3.03 9.54 L0.90 9.22 L0.90 6.78 L3.03 6.46 L3.40 5.57 L2.12 3.84 L3.84 2.12 L5.57 3.40 Z M10.6 8A2.6 2.6 0 1 0 5.4 8A2.6 2.6 0 1 0 10.6 8Z" fill="#333" fill-rule="evenodd"/></svg>
<div class="t" style="left:1771px;top:151px;font-size:12px;letter-spacing:-0.15px">Nastavení</div>
<svg class="a" style="left:1752px;top:179px" width="16" height="16" viewBox="0 0 16 16"><path d="M0.5 0.5L15.5 15.5M15.5 0.5L0.5 15.5" stroke="#444" stroke-width="0.8"/><circle cx="8" cy="8" r="2.8" fill="#fff" stroke="#333" stroke-width="1.2"/></svg>
<div class="t" style="left:1771px;top:180px;font-size:12px;letter-spacing:-0.15px">Styčníky</div>
<svg class="a" style="left:1752px;top:201px" width="16" height="16" viewBox="0 0 16 16"><path d="M2.5 13L13.5 2.5" stroke="#ff00ff" stroke-width="2"/><circle cx="2" cy="14" r="1.6" fill="#eee" stroke="#555" stroke-width="0.9"/><circle cx="14" cy="2" r="1.6" fill="#eee" stroke="#555" stroke-width="0.9"/></svg>
<div class="t" style="left:1771px;top:202px;font-size:12px;letter-spacing:-0.15px">Linie</div>
<svg class="a" style="left:1752px;top:223px" width="16" height="16" viewBox="0 0 16 16"><path d="M3.5 12.5V7.5H7.5V3.5H11.5V12.5Z" fill="#ff00ff" stroke="#333" stroke-width="1.2"/></svg>
<div class="t" style="left:1771px;top:224px;font-size:12px;letter-spacing:-0.15px">Makroprvky</div>
<svg class="a" style="left:1752px;top:245px" width="16" height="16" viewBox="0 0 16 16"><rect x="1.5" y="2.5" width="13" height="10" fill="#fff" stroke="#333" stroke-width="1.3"/><rect x="4.5" y="5.5" width="7" height="4" fill="#ff00ff" stroke="#333" stroke-width="0.8"/></svg>
<div class="t" style="left:1771px;top:246px;font-size:12px;letter-spacing:-0.15px">Otvory</div>
<svg class="a" style="left:1752px;top:267px" width="16" height="16" viewBox="0 0 16 16"><circle cx="8" cy="8" r="6.3" fill="none" stroke="#ff00ff" stroke-width="1.3"/><circle cx="8" cy="8" r="2.3" fill="#ddd" stroke="#555" stroke-width="1"/></svg>
<div class="t" style="left:1771px;top:268px;font-size:12px;letter-spacing:-0.15px">Zahuštění styčníků</div>
<svg class="a" style="left:1752px;top:289px" width="16" height="16" viewBox="0 0 16 16"><rect x="1" y="3.5" width="14" height="9.5" rx="4.75" fill="none" stroke="#ff00ff" stroke-width="1.3"/><path d="M4 8.3H12" stroke="#333" stroke-width="2"/></svg>
<div class="t" style="left:1771px;top:290px;font-size:12px;letter-spacing:-0.15px">Zahuštění linií</div>
<svg class="a" style="left:1752px;top:311px" width="16" height="16" viewBox="0 0 16 16"><path d="M0.8 15.2V5.5H4.8V0.8H15.2V15.2Z" fill="none" stroke="#ff00ff" stroke-width="1.3"/><path d="M4 12V8H7.5V4H12V12Z" fill="#ff00ff" stroke="#333" stroke-width="1.2"/></svg>
<div class="t" style="left:1771px;top:312px;font-size:12px;letter-spacing:-0.15px">Zahuštění makroprvků</div>
<svg class="a" style="left:1752px;top:333px" width="16" height="16" viewBox="0 0 16 16"><rect x="0.8" y="0.8" width="14.4" height="14.6" fill="#fff" stroke="#2a2a2a" stroke-width="1.4"/><path d="M0.8 5.5H15.2M0.8 10.5H15.2 M0.8 5L4.3 0.8L7.5 5.5L10.7 0.8L14 5.5L15.2 4 M0.8 6L4.3 10.5L7.5 5.5L10.7 10.5L14 5.5L15.2 7 M0.8 15L4.3 10.5L7.5 15.3L10.7 10.5L14 15.3L15.2 14" stroke="#2a2a2a" stroke-width="0.9" fill="none"/></svg>
<div class="t" style="left:1771px;top:334px;font-size:12px;letter-spacing:-0.15px">Generování sítě</div>
<svg class="a" style="left:1752px;top:362px" width="16" height="16" viewBox="0 0 16 16"><path d="M0.5 0.5L6.7 6.5M15.5 0.5L9.3 6.5" stroke="#444" stroke-width="0.8"/><circle cx="8" cy="7.5" r="1.6" fill="#fff" stroke="#333" stroke-width="0.9"/><path d="M4 14.3H12L8 9.5Z" fill="#ff00ff" stroke="#333" stroke-width="0.9"/></svg>
<div class="t" style="left:1771px;top:363px;font-size:12px;letter-spacing:-0.15px">Podpory styčníků</div>
<svg class="a" style="left:1752px;top:384px" width="16" height="16" viewBox="0 0 16 16"><path d="M0.5 15L15 1.5" stroke="#333" stroke-width="1.6"/><path d="M2 15.5H7L4.5 12.5Z M6.5 11.5H11.5L9 8.5Z M11 7.5H16L13.5 4.5Z" fill="#ff00ff" stroke="#333" stroke-width="0.7"/></svg>
<div class="t" style="left:1771px;top:385px;font-size:12px;letter-spacing:-0.15px">Podpory linií</div>
<svg class="a" style="left:1752px;top:406px" width="16" height="16" viewBox="0 0 16 16"><rect x="2.5" y="4.5" width="11" height="4" fill="#ff00ff" stroke="#333" stroke-width="1"/><path d="M1 9H5V11H1Z M11 9H15V11H11Z" fill="#333"/></svg>
<div class="t" style="left:1771px;top:407px;font-size:12px;letter-spacing:-0.15px">Nosníky</div>
<svg class="a" style="left:1752px;top:428px" width="16" height="16" viewBox="0 0 16 16"><path d="M0 8.5H15" stroke="#444" stroke-width="0.9"/><circle cx="7.5" cy="8.5" r="2.1" fill="#ff00ff" stroke="#333" stroke-width="0.8"/></svg>
<div class="t" style="left:1771px;top:429px;font-size:12px;letter-spacing:-0.15px">Vnitřní klouby</div>
<svg class="a" style="left:1752px;top:450px" width="16" height="16" viewBox="0 0 16 16"><rect x="2.5" y="3" width="11" height="4" fill="#fff" stroke="#333" stroke-width="1"/><rect x="0.5" y="7" width="15" height="8" fill="#ff00ff" stroke="#333" stroke-width="1.1"/></svg>
<div class="t" style="left:1771px;top:451px;font-size:12px;letter-spacing:-0.15px">Podloží makroprvků</div>
<svg class="a" style="left:1752px;top:479px" width="16" height="16" viewBox="0 0 16 16"><circle cx="8" cy="8" r="7.2" fill="#fff" stroke="#555" stroke-width="1"/><path d="M8 3V10" stroke="#1a6fd0" stroke-width="1.6"/><path d="M4.5 8.5H11.5L8 12.5Z" fill="#1a6fd0"/></svg>
<div class="t" style="left:1771px;top:480px;font-size:12px;letter-spacing:-0.15px">Zatěžovací stavy</div>
<svg class="a" style="left:1752px;top:501px" width="16" height="16" viewBox="0 0 16 16"><path d="M8 0V6" stroke="#1a6fd0" stroke-width="1.2"/><path d="M5.5 5H10.5L8 8.5Z" fill="#1a6fd0"/><path d="M0 13.5H16" stroke="#333" stroke-width="1"/><circle cx="8" cy="13.5" r="2" fill="#fff" stroke="#333" stroke-width="1"/></svg>
<div class="t" style="left:1771px;top:502px;font-size:12px;letter-spacing:-0.15px">Zatížení styčníků</div>
<svg class="a" style="left:1752px;top:523px" width="16" height="16" viewBox="0 0 16 16"><path d="M4 6.3V2H5.7V3H7.2V2H8.8V3H10.3V2H12V6.3Z" fill="#0a62c8"/><path d="M1 7H15" stroke="#222" stroke-width="1.6"/></svg>
<div class="t" style="left:1771px;top:524px;font-size:12px;letter-spacing:-0.15px">Zatížení linií</div>
<svg class="a" style="left:1752px;top:545px" width="16" height="16" viewBox="0 0 16 16"><defs><pattern id="chk" width="2" height="2" patternUnits="userSpaceOnUse"><rect width="2" height="2" fill="#fff"/><rect width="1" height="1" fill="#0a62c8"/><rect x="1" y="1" width="1" height="1" fill="#0a62c8"/></pattern></defs><path d="M3.5 10.8V6.2H7.2V1.2H11.6V10.8Z" fill="url(#chk)" stroke="#333" stroke-width="1.1" stroke-linejoin="round"/></svg>
<div class="t" style="left:1771px;top:546px;font-size:12px;letter-spacing:-0.15px">Zatížení makroprvků</div>
<svg class="a" style="left:1752px;top:567px" width="16" height="16" viewBox="0 0 16 16"><rect x="0.8" y="0.8" width="14.4" height="14.4" fill="#fff" stroke="#333" stroke-width="1.2"/><circle cx="8" cy="8" r="2" fill="#1a6fd0"/></svg>
<div class="t" style="left:1771px;top:568px;font-size:12px;letter-spacing:-0.15px">Volné bodové zatížení</div>
<svg class="a" style="left:1752px;top:589px" width="16" height="16" viewBox="0 0 16 16"><rect x="0.8" y="0.8" width="14.4" height="14.4" fill="#fff" stroke="#333" stroke-width="1.2"/><path d="M3.5 12.5L12.5 3.5" stroke="#1a6fd0" stroke-width="1.8"/></svg>
<div class="t" style="left:1771px;top:590px;font-size:12px;letter-spacing:-0.15px">Volné liniové zatížení</div>
<svg class="a" style="left:1752px;top:611px" width="16" height="16" viewBox="0 0 16 16"><rect x="0.8" y="0.8" width="14.4" height="14.4" fill="#fff" stroke="#333" stroke-width="1.2"/><rect x="4" y="3" width="9" height="5" fill="#1a6fd0"/></svg>
<div class="t" style="left:1771px;top:612px;font-size:12px;letter-spacing:-0.15px">Volné plošné zatížení</div>
<svg class="a" style="left:1752px;top:633px" width="16" height="16" viewBox="0 0 16 16"><circle cx="8" cy="8" r="7.3" fill="#fff" stroke="#555" stroke-width="1"/><text x="8" y="12.5" text-anchor="middle" font-family="Liberation Sans" font-size="12" fill="#1a6fd0">1</text></svg>
<div class="t" style="left:1771px;top:634px;font-size:12px;letter-spacing:-0.15px">Kombinace MSÚ</div>
<svg class="a" style="left:1752px;top:655px" width="16" height="16" viewBox="0 0 16 16"><circle cx="8" cy="8" r="7.3" fill="#fff" stroke="#555" stroke-width="1"/><text x="8" y="12.5" text-anchor="middle" font-family="Liberation Sans" font-size="12" fill="#1a6fd0">2</text></svg>
<div class="t" style="left:1771px;top:656px;font-size:12px;letter-spacing:-0.15px">Kombinace MSP</div>
<svg class="a" style="left:1752px;top:684px" width="16" height="16" viewBox="0 0 16 16"><text x="9.5" y="7" text-anchor="middle" font-family="Liberation Sans" font-size="9" fill="#222">1,2</text><rect x="0.5" y="8.5" width="15" height="6" fill="#fcd33c" stroke="#333" stroke-width="1"/><path d="M2.5 11.5H4M6 11.5H7.5M9 11.5H10.5M12 11.5H13.5" stroke="#c00" stroke-width="2"/></svg>
<div class="t" style="left:1771px;top:685px;font-size:12px;letter-spacing:-0.15px">Parametry dimenzování</div>
<svg class="a" style="left:1752px;top:706px" width="16" height="16" viewBox="0 0 16 16"><path d="M3.5 12.5V8.5H7.5V3.5H11.5V12.5Z" fill="#d00" stroke="#333" stroke-width="1.1"/></svg>
<div class="t" style="left:1771px;top:707px;font-size:12px;letter-spacing:-0.15px">Dimenzování makroprvků</div>
<svg class="a" style="left:1752px;top:735px" width="16" height="16" viewBox="0 0 16 16"><path d="M8 0V5" stroke="#d00" stroke-width="1.2"/><path d="M5 4.5H11L8 8Z" fill="#d00"/><rect x="0.5" y="9" width="15" height="7" fill="#fcd33c" stroke="#333" stroke-width="1"/><rect x="1" y="11.3" width="14" height="2.4" fill="#d00"/></svg>
<div class="t" style="left:1771px;top:736px;font-size:12px;letter-spacing:-0.15px">Výpočet</div>
<svg class="a" style="left:1752px;top:757px" width="16" height="16" viewBox="0 0 16 16"><path d="M2.5 2V4.5H0V8.5H2.5V11H5.5V8.5H8V4.5H5.5V2Z" fill="#d00" stroke="#333" stroke-width="0.8"/><rect x="9.5" y="0.5" width="6.5" height="13" fill="#fcd33c" stroke="#333" stroke-width="1"/><path d="M10 3H16M10 5.3H16M10 7.6H16M10 9.9H16" stroke="#333" stroke-width="0.8"/></svg>
<div class="t" style="left:1771px;top:758px;font-size:12px;letter-spacing:-0.15px">Hodnoty</div>
<div class="a" style="left:1748px;top:172px;width:165px;height:1px;background:#a0a0a0"></div>
<div class="a" style="left:1748px;top:355px;width:165px;height:1px;background:#a0a0a0"></div>
<div class="a" style="left:1748px;top:472px;width:165px;height:1px;background:#a0a0a0"></div>
<div class="a" style="left:1748px;top:677px;width:165px;height:1px;background:#a0a0a0"></div>
<div class="a" style="left:1748px;top:728px;width:165px;height:1px;background:#a0a0a0"></div>
<div class="a" style="left:1748px;top:780px;width:166px;height:13px;background:#e1e1e1;border:1px solid #adadad"></div>
<svg class="a" style="left:1823px;top:783px" width="14" height="6"><path d="M1 1L7 4.5L13 1" stroke="#333" stroke-width="1" fill="none"/></svg>
<div class="a" style="left:1744px;top:797px;width:173px;height:20px;background:#d3d3d3"></div>
<div class="t" style="left:1748px;top:800px;font-size:12px">Výstupy</div>
<div class="a" style="left:1903px;top:808px;width:6px;height:2px;background:#000"></div>
<div class="a" style="left:1748px;top:821px;width:165px;height:22px;background:#e1e1e1;border:1px solid #adadad"></div>
<svg class="a" style="left:1752px;top:824px" width="17" height="16" viewBox="0 0 17 16"><rect x="0.5" y="0.5" width="15" height="15" fill="#fff" stroke="#777" stroke-width="1"/><path d="M3.5 3V12.5H9.5V8.5H3.5 M3.5 6H6L7 8.5" fill="none" stroke="#222" stroke-width="1"/><path d="M12 1.5V7.5M9 4.5H15" stroke="#0a9a20" stroke-width="2"/></svg>
<div class="t" style="left:1771px;top:825px;font-size:12px">Přidat obrázek</div>
<div class="t" style="left:1748px;top:848px;font-size:12px">Zahuštění linií :</div>
<div class="t" style="left:1906px;top:848px;font-size:12px">0</div>
<div class="t" style="left:1748px;top:869px;font-size:12px">Celkem :</div>
<div class="t" style="left:1906px;top:869px;font-size:12px">0</div>
<div class="a" style="left:1748px;top:888px;width:165px;height:22px;background:#e1e1e1;border:1px solid #adadad"></div>
<svg class="a" style="left:1752px;top:891px" width="17" height="16" viewBox="0 0 17 16"><rect x="0.5" y="0.5" width="15" height="15" fill="#fff" stroke="#777" stroke-width="1"/><path d="M3.5 3V12.5H9.5V8.5H3.5 M3.5 6H6L7 8.5" fill="none" stroke="#222" stroke-width="1"/><path d="M9 3.5H14M9 6H14M9 8.5H14" stroke="#333" stroke-width="1"/></svg>
<div class="t" style="left:1771px;top:892px;font-size:12px">Seznam obrázků</div>
<div class="a" style="left:1748px;top:916px;width:165px;height:1px;background:#a0a0a0"></div>
<div class="a" style="left:1748px;top:923px;width:165px;height:22px;background:#e1e1e1;border:1px solid #adadad"></div>
<svg class="a" style="left:1752px;top:926px" width="16" height="16" viewBox="0 0 16 16"><rect x="1.5" y="1.5" width="13" height="12" fill="#fff" stroke="#333" stroke-width="1.2"/><path d="M3 4.5H13M3 6.5H13M3 8.5H13M3 10.5H13M3 12H13" stroke="#666" stroke-width="0.7"/><path d="M5.5 3V13M9.5 3V13" stroke="#fff" stroke-width="0.8"/></svg>
<div class="t" style="left:1771px;top:927px;font-size:12px">Správce dodatků</div>
<div class="a" style="left:1748px;top:951px;width:165px;height:1px;background:#a0a0a0"></div>
<div class="a" style="left:1748px;top:958px;width:80px;height:42px;background:#e1e1e1;border:1px solid #adadad"></div>
<div class="a" style="left:1833px;top:958px;width:80px;height:42px;background:#e1e1e1;border:1px solid #adadad"></div>
<svg class="a" style="left:1776px;top:965px" width="25" height="30" viewBox="0 0 25 30"><rect x="2" y="2.5" width="20" height="8" rx="1" fill="#b8a47a" stroke="#222" stroke-width="1"/><rect x="5" y="0.5" width="14" height="6" fill="#fff" stroke="#222" stroke-width="1"/><rect x="0.5" y="6.5" width="24" height="12" rx="1" fill="#c9b78e" stroke="#222" stroke-width="1"/><rect x="3" y="12" width="19" height="3" fill="#333"/><rect x="4" y="15" width="17" height="14.5" rx="0.5" fill="#fff" stroke="#222" stroke-width="1"/><path d="M7 19H18M7 21.5H18M7 24H18M11 26.5H18" stroke="#222" stroke-width="1"/></svg>
<svg class="a" style="left:1861px;top:965px" width="25" height="30" viewBox="0 0 25 30"><rect x="2" y="2.5" width="20" height="8" rx="1" fill="#b8a47a" stroke="#222" stroke-width="1"/><rect x="5" y="0.5" width="14" height="6" fill="#fff" stroke="#222" stroke-width="1"/><rect x="0.5" y="6.5" width="24" height="12" rx="1" fill="#c9b78e" stroke="#222" stroke-width="1"/><rect x="3" y="12" width="19" height="3" fill="#333"/><rect x="4" y="15" width="17" height="14.5" rx="0.5" fill="#fff" stroke="#222" stroke-width="1"/><path d="M8 18.5H7V26.5H8 M10 18H18V19.5H11 M12 21H17.5V22.5H13 M14 24H17V25.5H15" stroke="#f00" stroke-width="1.2" fill="none"/></svg>
<div class="a" style="left:1748px;top:1003px;width:165px;height:22px;background:#e1e1e1;border:1px solid #adadad"></div>
<svg class="a" style="left:1751px;top:1006px" width="18" height="17" viewBox="0 0 18 17"><rect x="0.5" y="0.5" width="8" height="10" fill="#fff" stroke="#777" stroke-width="1"/><path d="M2.5 3H4L5 4V5H2.5Z M2.5 6H6V8.5H2.5Z" fill="none" stroke="#333" stroke-width="0.8"/><path d="M10 5H12V8.5M10.5 7.5L12 9L13.5 7.5" stroke="#0a9a20" stroke-width="1.1" fill="none"/><rect x="9.5" y="10.5" width="7" height="6" fill="#fff" stroke="#333" stroke-width="1"/><path d="M11 13H15" stroke="#333" stroke-width="0.8"/></svg>
<div class="t" style="left:1771px;top:1006px;font-size:12px">Kopírovat pohled</div>
<!--/RIGHT-->
<!--DIALOG-->
<!-- DIALOG -->
<div class="a" style="left:142px;top:281px;width:383px;height:203px;border-radius:8px;background:#f0f0f0;box-shadow:0 0 0 1px rgba(0,0,0,0.16),0 2px 16px rgba(0,0,0,0.16),0 20px 50px rgba(0,0,0,0.32);overflow:hidden">
  <div class="a" style="left:0;top:0;width:383px;height:30px;background:#fff"></div>
</div>
<div class="t" style="left:151px;top:289px;font-size:12px;letter-spacing:-0.2px">Úprava vlastností zahuštění linie č. 1</div>
<svg class="a" style="left:503px;top:291px" width="13" height="12" viewBox="0 0 13 12"><path d="M1 0.5L12 11.5M12 0.5L1 11.5" stroke="#000" stroke-width="2"/></svg>
<div class="a" style="left:150px;top:326px;width:10px;height:1px;background:#a8a8a8"></div>
<div class="t" style="left:164px;top:320px;font-size:12px">Linie</div>
<div class="a" style="left:192px;top:326px;width:325px;height:1px;background:#a8a8a8"></div>
<div class="t" style="left:150px;top:345px;font-size:12px;letter-spacing:-0.3px">Linie :</div>
<div class="a" style="left:186px;top:342px;width:99px;height:20px;background:#fff;border:1px solid #a8a8a8"></div>
<div class="t" style="left:189px;top:345px;font-size:12px;letter-spacing:-0.35px">č.&nbsp;&nbsp;7 (úsečka)</div>
<svg class="a" style="left:271px;top:349px" width="9" height="6"><path d="M0.5 0.5H8.5L4.5 5Z" fill="#000"/></svg>
<div class="a" style="left:150px;top:375px;width:10px;height:1px;background:#a8a8a8"></div>
<div class="t" style="left:164px;top:369px;font-size:12px;letter-spacing:-0.15px">Zahuštění</div>
<div class="a" style="left:219px;top:375px;width:298px;height:1px;background:#a8a8a8"></div>
<div class="t" style="left:150px;top:394px;font-size:12px;letter-spacing:-0.3px">Dosah : r =</div>
<div class="a" style="left:212px;top:391px;width:96px;height:20px;background:#fff;border:1px solid #a8a8a8"></div>
<div class="t" style="left:303px;top:394px;font-size:12px;transform:translateX(-100%)">1,00</div>
<div class="t" style="left:313px;top:394px;font-size:12px">[m]</div>
<div class="t" style="left:150px;top:420px;font-size:12px;letter-spacing:-0.3px">Délka :</div><div class="t" style="left:194px;top:420px;font-size:12px">l =</div>
<div class="a" style="left:212px;top:417px;width:96px;height:20px;background:#fff;border:1px solid #a8a8a8"></div>
<div class="t" style="left:303px;top:420px;font-size:12px;transform:translateX(-100%)">0,50</div>
<div class="t" style="left:313px;top:420px;font-size:12px">[m]</div>
<div class="a" style="left:150px;top:445px;width:367px;height:1px;background:#a8a8a8"></div>
<div class="a" style="left:336px;top:454px;width:88px;height:22px;background:#e1e1e1;border:1px solid #0078d7"></div>
<div class="a" style="left:338px;top:456px;width:84px;height:18px;border:1px dotted #222"></div>
<svg class="a" style="left:361px;top:458px" width="15" height="13" viewBox="0 0 15 13"><path d="M1.5 6.5L5.5 10.5L13.5 1.5" stroke="#10a010" stroke-width="3" fill="none"/></svg>
<div class="t" style="left:380px;top:458px;font-size:12px">OK</div>
<div class="a" style="left:429px;top:454px;width:88px;height:22px;background:#e1e1e1;border:1px solid #adadad"></div>
<svg class="a" style="left:446px;top:459px" width="12" height="12" viewBox="0 0 12 12"><path d="M1.5 1.5L10.5 10.5M10.5 1.5L1.5 10.5" stroke="#e01010" stroke-width="2.6"/></svg>
<div class="t" style="left:462px;top:458px;font-size:12px">Storno</div>

<!--/DIALOG-->
</body></html>
